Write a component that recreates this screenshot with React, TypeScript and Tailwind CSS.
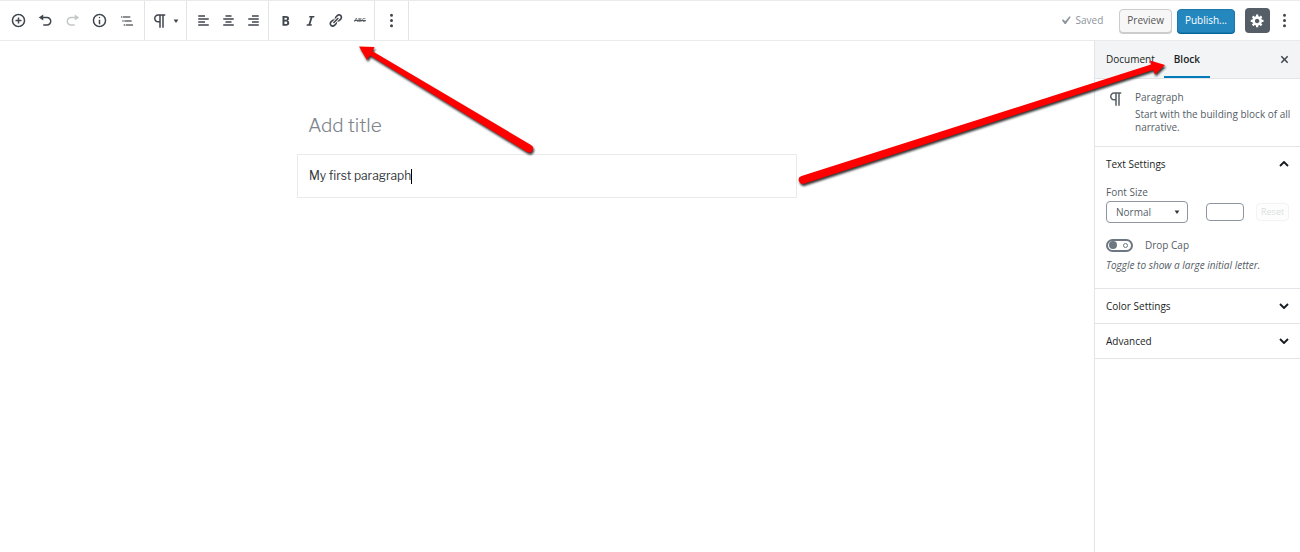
import type { ReactNode } from 'react'

const paths = {
  insert: 'M10 1c-5 0-9 4-9 9s4 9 9 9 9-4 9-9-4-9-9-9zm0 16c-3.9 0-7-3.1-7-7s3.1-7 7-7 7 3.1 7 7-3.1 7-7 7zm1-11H9v3H6v2h3v3h2v-3h3V9h-3V6z',
  undo: 'M12 5H7V2L1 6l6 4V7h5c2.2 0 4 1.8 4 4s-1.8 4-4 4H7v2h5c3.3 0 6-2.7 6-6s-2.7-6-6-6z',
  redo: 'M8 5h5V2l6 4-6 4V7H8c-2.2 0-4 1.8-4 4s1.8 4 4 4h5v2H8c-3.3 0-6-2.7-6-6s2.7-6 6-6z',
  info: 'M9 15h2V9H9v6zm1-10c-.5 0-1 .5-1 1s.5 1 1 1 1-.5 1-1-.5-1-1-1zm0-4c-5 0-9 4-9 9s4 9 9 9 9-4 9-9-4-9-9-9zm0 16c-3.9 0-7-3.1-7-7s3.1-7 7-7 7 3.1 7 7-3.1 7-7 7z',
  outline: 'M5 5H3v2h2V5zm3 8h11v-2H8v2zm9-8H6v2h11V5zM7 11H5v2h2v-2zm0 8h2v-2H7v2zm3-2v2h11v-2H10z',
  paragraph: 'M11 5v7H9.5C7.6 12 6 10.4 6 8.5S7.6 5 9.5 5H11m8-2H9.5C6.5 3 4 5.5 4 8.5S6.5 14 9.5 14H11v7h2V5h2v16h2V5h2V3z',
  alignLeft: 'M12 5V3H3v2h9zm5 4V7H3v2h14zm-5 4v-2H3v2h9zm5 4v-2H3v2h14z',
  alignCenter: 'M14 5V3H6v2h8zm3 4V7H3v2h14zm-3 4v-2H6v2h8zm3 4v-2H3v2h14z',
  alignRight: 'M17 5V3H8v2h9zm0 4V7H3v2h14zm0 4v-2H8v2h9zm0 4v-2H3v2h14z',
  bold: 'M6 4v13h4.54c1.37 0 2.46-.33 3.26-1 .8-.66 1.2-1.58 1.2-2.77 0-.84-.17-1.51-.51-2.01s-.9-.85-1.67-1.03v-.09c.57-.1 1.02-.4 1.36-.9s.51-1.13.51-1.91c0-1.14-.39-1.98-1.17-2.5C12.75 4.26 11.5 4 9.78 4H6zm2.57 5.15V6.26h1.36c.73 0 1.27.11 1.61.32.34.22.51.58.51 1.07 0 .54-.16.92-.47 1.15s-.82.35-1.51.35h-1.5zm0 2.19h1.6c1.44 0 2.16.53 2.16 1.61 0 .6-.17 1.05-.51 1.34s-.86.43-1.57.43H8.57v-3.38z',
  italic: 'M14.78 6h-2.13l-2.8 9h2.12l-.62 2H4.6l.62-2h2.14l2.8-9H8.03l.62-2h6.75z',
  link: 'M17.74 2.76c1.68 1.69 1.68 4.41 0 6.1l-1.53 1.52c-1.12 1.12-2.7 1.47-4.14 1.09l2.62-2.61.76-.77.76-.76c.84-.84.84-2.2 0-3.04-.84-.85-2.2-.85-3.04 0l-.77.76-3.38 3.38c-.37-1.44-.02-3.02 1.1-4.14l1.52-1.53c1.69-1.68 4.42-1.68 6.1 0zM8.59 13.43l5.34-5.34c.42-.42.42-1.1 0-1.52-.44-.43-1.13-.39-1.53 0l-5.33 5.34c-.42.42-.42 1.1 0 1.52.44.43 1.13.39 1.52 0zm-.76 2.29l4.14-4.15c.38 1.44.03 3.02-1.09 4.14l-1.52 1.53c-1.69 1.68-4.41 1.68-6.1 0-1.68-1.68-1.68-4.42 0-6.1l1.53-1.52c1.12-1.12 2.7-1.47 4.14-1.1l-4.14 4.15c-.85.84-.85 2.2 0 3.05.84.84 2.2.84 3.04 0z',
  more: 'M10 1a2 2 0 1 1 0 4 2 2 0 0 1 0-4zm0 7a2 2 0 1 1 0 4 2 2 0 0 1 0-4zm0 7a2 2 0 1 1 0 4 2 2 0 0 1 0-4z',
  gear: 'M18 12h-2.18c-.17.7-.44 1.35-.81 1.93l1.54 1.54-2.1 2.1-1.54-1.54c-.58.36-1.23.63-1.91.79V19H8v-2.18c-.68-.16-1.33-.43-1.91-.79l-1.54 1.54-2.12-2.12 1.54-1.54c-.36-.58-.63-1.23-.79-1.91H1V9.03h2.17c.16-.7.44-1.35.8-1.94L2.43 5.55l2.1-2.1 1.54 1.54c.58-.37 1.24-.64 1.93-.81V2h3v2.18c.68.16 1.33.43 1.91.79l1.54-1.54 2.12 2.12-1.54 1.54c.36.59.64 1.24.8 1.94H18V12zm-8.5 1.5c1.66 0 3-1.34 3-3s-1.34-3-3-3-3 1.34-3 3 1.34 3 3 3z',
  close: 'M14.95 6.46L11.41 10l3.54 3.54-1.41 1.41L10 11.42l-3.53 3.53-1.42-1.42L8.58 10 5.05 6.47l1.42-1.42L10 8.58l3.54-3.53z',
  check: 'M14.83 4.89l1.34.94-5.81 8.38H9.02L5.78 9.67l1.34-1.25 2.57 2.4z',
  caret: 'M4 6h12l-6 9z',
}

type IconName = keyof typeof paths

function Icon({ name, box = 20, className = 'size-[15px]' }: { name: IconName; box?: number; className?: string }) {
  return (
    <svg viewBox={`0 0 ${box} ${box}`} className={`shrink-0 ${className}`} fill="currentColor" aria-hidden="true">
      <path d={paths[name]} />
    </svg>
  )
}

function ToolButton({ label, className = 'w-[25px]', disabled, children }: { label: string; className?: string; disabled?: boolean; children: ReactNode }) {
  return (
    <button type="button" aria-label={label} disabled={disabled} className={`flex h-full items-center justify-center disabled:opacity-30 ${className}`}>
      {children}
    </button>
  )
}

function PanelToggle({ title, open }: { title: string; open?: boolean }) {
  return (
    <button type="button" aria-expanded={!!open} className="flex h-[34px] w-full items-center justify-between px-[11px] font-medium text-[#191e23]">
      {title}
      <svg viewBox="0 0 10 6" className="h-[6px] w-[10px]" fill="none" stroke="currentColor" strokeWidth="1.9" aria-hidden="true">
        <path d={open ? 'M1 5l4-4 4 4' : 'M1 1l4 4 4-4'} />
      </svg>
    </button>
  )
}

function Toolbar() {
  return (
    <header className="flex h-[41px] items-stretch border-y border-[#e8eaeb] text-[#40464d]">
      <div className="flex pl-[5px] pr-1">
        <ToolButton label="Add block" className="w-[27px]"><Icon name="insert" /></ToolButton>
        <ToolButton label="Undo" className="w-[27px]"><Icon name="undo" /></ToolButton>
        <ToolButton label="Redo" className="w-[27px]" disabled><Icon name="redo" /></ToolButton>
        <ToolButton label="Content structure" className="w-[27px]"><Icon name="info" /></ToolButton>
        <ToolButton label="Block navigation" className="w-[27px]"><Icon name="outline" box={24} className="size-4 opacity-80" /></ToolButton>
      </div>
      <div className="flex w-[42px] border-l border-[#e2e4e7]">
        <ToolButton label="Change block type" className="w-full gap-[3px]">
          <Icon name="paragraph" box={24} className="size-[18px]" />
          <Icon name="caret" className="size-2" />
        </ToolButton>
      </div>
      <div className="flex border-x border-[#e2e4e7] pr-[2px] pl-1">
        <ToolButton label="Align left"><Icon name="alignLeft" /></ToolButton>
        <ToolButton label="Align center"><Icon name="alignCenter" /></ToolButton>
        <ToolButton label="Align right"><Icon name="alignRight" /></ToolButton>
      </div>
      <div className="flex pr-[2px] pl-1">
        <ToolButton label="Bold"><Icon name="bold" /></ToolButton>
        <ToolButton label="Italic"><Icon name="italic" /></ToolButton>
        <ToolButton label="Link"><Icon name="link" /></ToolButton>
        <ToolButton label="Strikethrough" className="w-[24px]">
          <span className="text-[6px] font-semibold line-through opacity-90">ABC</span>
        </ToolButton>
      </div>
      <div className="flex border-x border-[#e2e4e7] px-1">
        <ToolButton label="More options"><Icon name="more" /></ToolButton>
      </div>

      <div className="ml-auto flex items-center pr-1 text-[10px]">
        <span className="mr-4 flex items-center text-[#8d949b]">
          <Icon name="check" className="mr-[2px] size-[17px]" />
          Saved
        </span>
        <button type="button" className="mr-[5px] h-6 rounded-sm border border-[#ccc] bg-[#f7f7f7] px-[7px] text-[#555] shadow-[0_1px_0_#ccc]">
          Preview
        </button>
        <button type="button" className="mr-[10px] h-6 rounded-sm border border-[#1b78ac] bg-[#2487be] px-[7px] text-white shadow-[0_1px_0_#006799]">
          Publish...
        </button>
        <button type="button" aria-label="Settings" className="mr-[3px] flex size-[25px] items-center justify-center rounded-sm bg-[#555d66] text-white">
          <Icon name="gear" />
        </button>
        <button type="button" aria-label="More tools" className="flex h-[25px] w-[23px] items-center justify-center">
          <Icon name="more" />
        </button>
      </div>
    </header>
  )
}

function Sidebar() {
  return (
    <aside className="w-[206px] shrink-0 border-l border-[#e2e4e7] text-[10px] text-[#555d66]">
      <div className="flex h-[38px] items-stretch border-b border-[#e2e4e7] bg-[#f3f4f5] text-[#191e23]">
        <button type="button" className="pr-[9px] pl-[11px]">Document</button>
        <button type="button" className="border-b-2 border-[#007cba] px-[10px] pt-[2px] font-semibold">Block</button>
        <button type="button" aria-label="Close settings" className="ml-auto flex w-8 items-center justify-center text-[#40464d]">
          <Icon name="close" />
        </button>
      </div>

      <div className="flex border-b border-[#e2e4e7] pt-[11px] pr-1 pb-3 pl-3">
        <Icon name="paragraph" box={24} className="mr-[10px] size-[18px]" />
        <div>
          <h2 className="mb-1 leading-[14px] font-medium">Paragraph</h2>
          <p className="leading-[13px]">Start with the building block of all narrative.</p>
        </div>
      </div>

      <section className="border-b border-[#e2e4e7]">
        <PanelToggle title="Text Settings" open />
        <div className="px-[11px] pt-[3px] pb-[15px]">
          <label htmlFor="font-size" className="mb-px block leading-4">Font Size</label>
          <div className="flex items-center">
            <div className="relative">
              <select id="font-size" className="h-[22px] w-[82px] appearance-none rounded-sm border border-[#8d96a0] bg-white pl-[9px]">
                <option>Normal</option>
              </select>
              <Icon name="caret" className="pointer-events-none absolute top-[7px] right-[7px] size-2 text-[#32373c]" />
            </div>
            <input type="text" aria-label="Custom size" className="ml-[18px] h-[18px] w-[38px] rounded-sm border border-[#8d96a0]" />
            <button type="button" disabled className="ml-3 h-[18px] rounded-sm border border-[#f3f3f3] bg-[#fdfdfd] px-1 text-[9px] text-[#dcdfe1]">
              Reset
            </button>
          </div>
          <div className="mt-[14px] flex items-center">
            <button type="button" role="switch" aria-checked="false" aria-labelledby="drop-cap" className="mr-3 flex h-[13px] w-[27px] items-center justify-between rounded-full border-2 border-[#6c7781] pr-[3px] pl-px">
              <span className="size-2 rounded-full bg-[#6c7781]" />
              <span className="size-[5px] rounded-full border border-[#6c7781]" />
            </button>
            <span id="drop-cap" className="leading-4">Drop Cap</span>
          </div>
          <p className="mt-1 leading-4 italic">Toggle to show a large initial letter.</p>
        </div>
      </section>
      <section className="border-b border-[#e2e4e7]">
        <PanelToggle title="Color Settings" />
      </section>
      <section className="border-b border-[#e2e4e7]">
        <PanelToggle title="Advanced" />
      </section>
    </aside>
  )
}

function Arrows() {
  return (
    <svg className="pointer-events-none absolute top-0 left-0 h-[552px] w-[1300px]" viewBox="0 0 1300 552" aria-hidden="true">
      <g fill="#fe0000" className="drop-shadow-[1px_2px_1px_rgb(0_0_0/0.8)]">
        <path d="M359 46.5L374.500 47L372.500 51.300L531 145A4 4 0 0 1 527 152L370 55.500L367 60Z" />
        <path d="M1165 65L1150 60.500L1151 64.500L801.500 176A4 4 0 0 0 804 183.700L1153 70L1155 74.500Z" />
      </g>
    </svg>
  )
}

export default function App() {
  return (
    <div className="relative flex min-h-screen flex-col overflow-hidden bg-white font-['Open_Sans','Noto_Sans',sans-serif]">
      <Toolbar />
      <div className="flex flex-1">
        <main className="flex-1 pt-[69px] font-['Libre_Franklin','Inter',sans-serif]">
          <div className="mx-auto max-w-[500px]">
            <input
              type="text"
              aria-label="Post title"
              placeholder="Add title"
              className="mb-[14px] block h-[30px] w-full px-[11px] text-[19px] font-light placeholder:text-[#7e858d]"
            />
            <div className="flex h-[44px] items-center border border-[#e8eaeb] px-[11px] text-[12px] text-[#32373c]">
              <p>My first paragraph</p>
              <span className="h-[15px] w-px bg-black" />
            </div>
          </div>
        </main>
        <Sidebar />
      </div>
      <Arrows />
    </div>
  )
}
